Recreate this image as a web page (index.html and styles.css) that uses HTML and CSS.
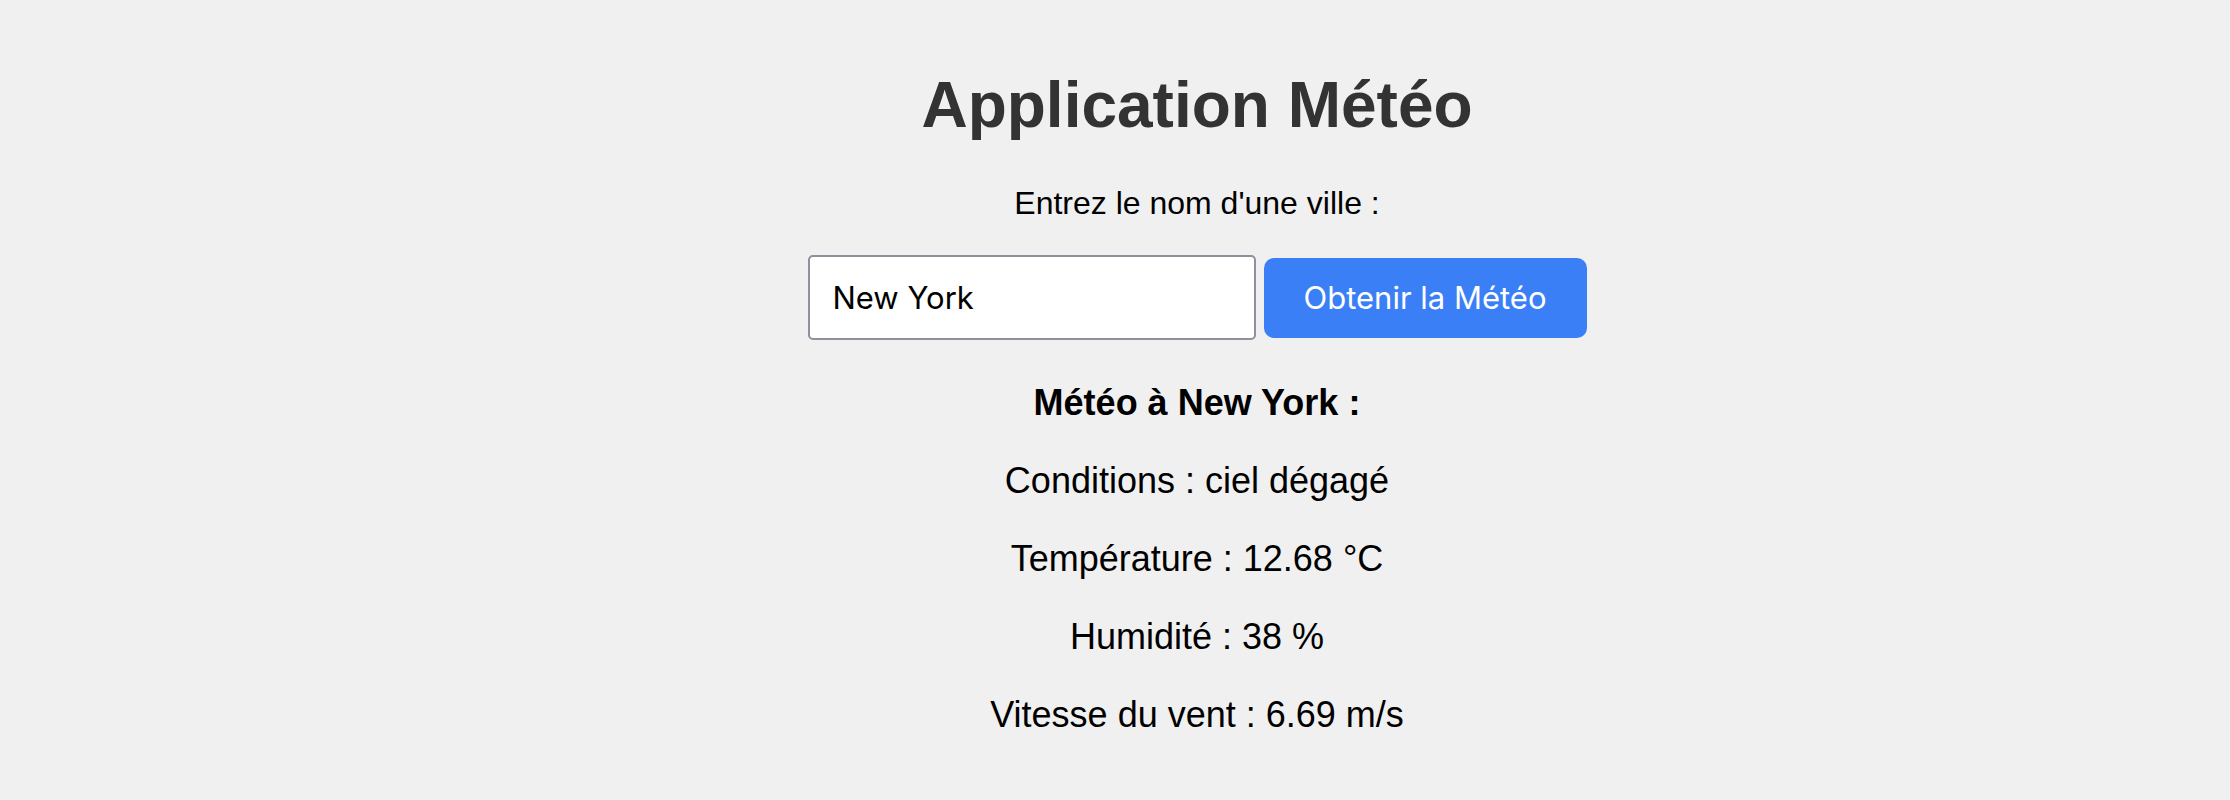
FILE: index.html
```html
<!DOCTYPE html>
<html lang="fr">
<head>
<meta charset="utf-8">
<title>Application Météo</title>
<link rel="stylesheet" href="styles.css">
</head>
<body>
<main class="app">
  <h1 class="title">Application Météo</h1>
  <label class="label" for="city">Entrez le nom d'une ville :</label>
  <div class="search">
    <input class="city-input" id="city" type="text" value="New York">
    <button class="fetch-btn" type="button">Obtenir la Météo</button>
  </div>
  <section class="result">
    <p class="result-title">Météo à New York :</p>
    <p class="result-row">Conditions : ciel dégagé</p>
    <p class="result-row">Température : 12.68 °C</p>
    <p class="result-row">Humidité : 38 %</p>
    <p class="result-row">Vitesse du vent : 6.69 m/s</p>
  </section>
</main>
</body>
</html>
```

FILE: styles.css
```css
html, body {
  margin: 0;
  padding: 0;
}

body {
  background: #f0f0f0;
  font-family: "Liberation Sans", Arial, sans-serif;
  color: #000;
}

.app {
  display: flex;
  flex-direction: column;
  align-items: center;
  text-align: center;
  padding: 68px 0 0 164px;
}

.title {
  margin: 0;
  font-size: 64px;
  line-height: 74px;
  font-weight: bold;
  color: #333;
}

.label {
  display: block;
  margin-top: 43px;
  font-size: 32px;
  line-height: 37px;
}

.search {
  display: flex;
  align-items: center;
  gap: 8px;
  margin-top: 33px;
}

.city-input {
  box-sizing: border-box;
  width: 448px;
  height: 85px;
  margin: 0;
  padding: 0 20px 0 23px;
  border: 2px solid #8f8f9d;
  border-radius: 5px;
  background: #fff;
  font-family: Inter, "Liberation Sans", sans-serif;
  font-size: 31px;
  color: #000;
  outline: none;
}

.fetch-btn {
  box-sizing: border-box;
  width: 323px;
  height: 80px;
  margin: 0;
  padding: 0;
  border: none;
  border-radius: 10px;
  background: #3b7ff6;
  color: #fff;
  font-family: Inter, "Liberation Sans", sans-serif;
  font-size: 31px;
}

.result {
  margin-top: 42px;
}

.result p {
  margin: 0;
  font-size: 36px;
  line-height: 41px;
}

.result p + p {
  margin-top: 37px;
}

.result-title {
  font-weight: bold;
}
```
